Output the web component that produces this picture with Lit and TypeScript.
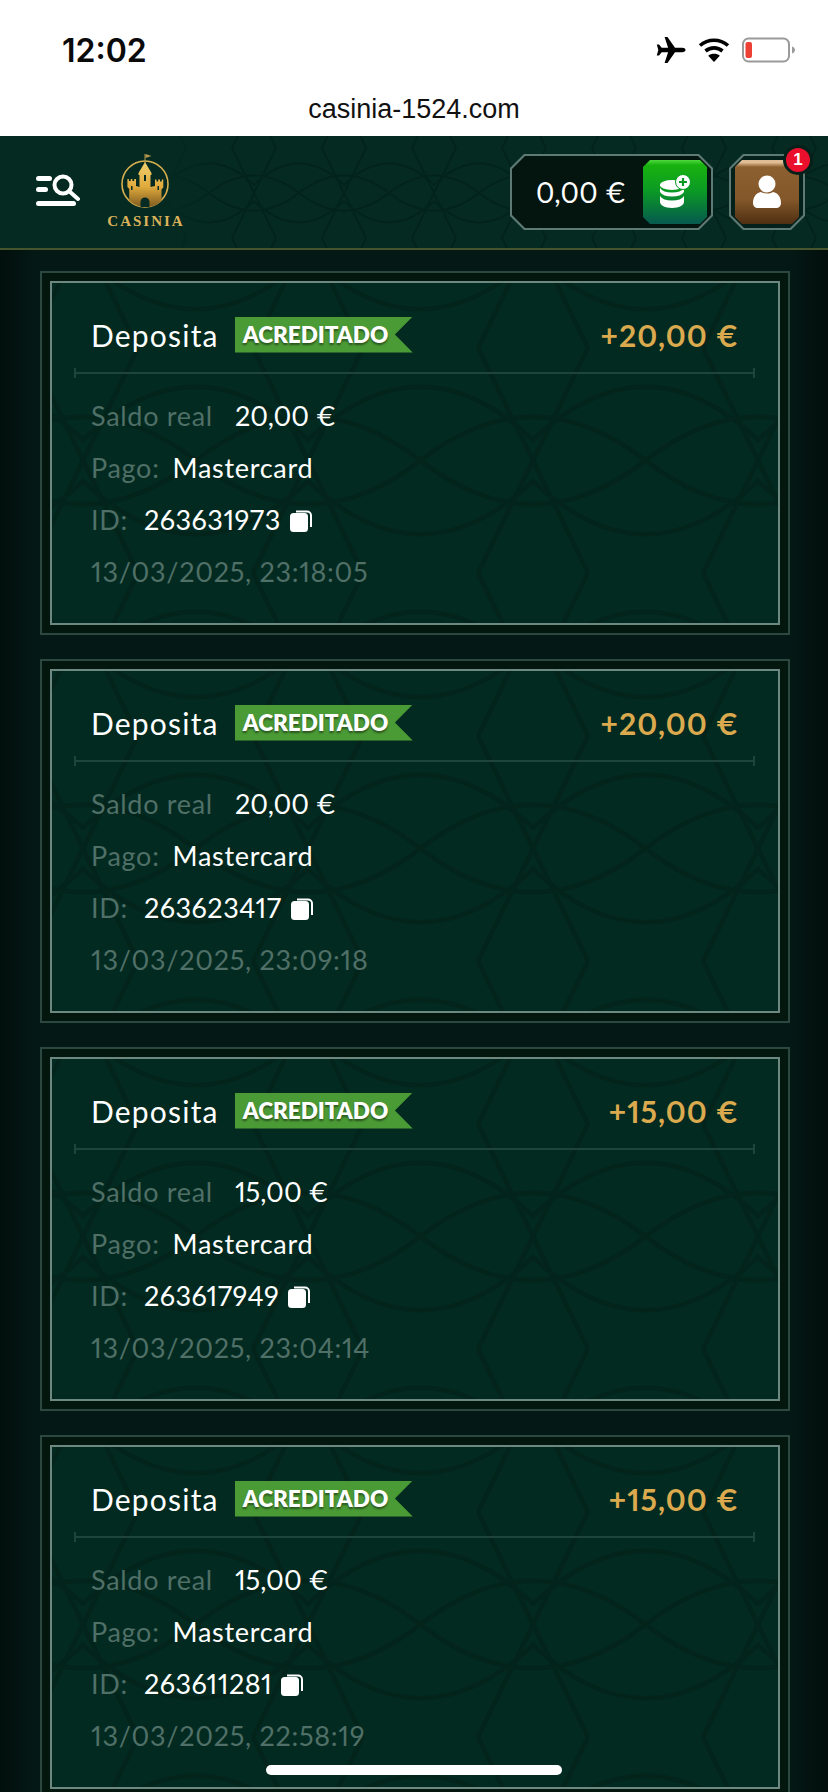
import { LitElement, html, svg, css } from 'lit';
import { customElement } from 'lit/decorators.js';

const deposits = [
  { amount: '20,00 €', id: '263631973', date: '13/03/2025, 23:18:05' },
  { amount: '20,00 €', id: '263623417', date: '13/03/2025, 23:09:18' },
  { amount: '15,00 €', id: '263617949', date: '13/03/2025, 23:04:14' },
  { amount: '15,00 €', id: '263611281', date: '13/03/2025, 22:58:19' },
];

// same interlaced motif for header and cards, only scaled differently
const motif = (stroke: string, width: number) => svg`
  <g fill="none" stroke=${stroke} stroke-width=${width}>
    <path d="M-8 45Q45 -14 98 45Q45 104 -8 45Z" />
    <path d="M-45 45Q0 10 45 45Q90 10 135 45" />
    <path d="M-45 45Q0 80 45 45Q90 80 135 45" />
    <path d="M-22 0L22 90M22 0L-22 90M68 0L112 90M112 0L68 90" />
  </g>
`;

const cardPattern = (pid: string) => html`
  <svg class="pattern" aria-hidden="true">
    <defs>
      <pattern id=${pid} width="90" height="90" patternUnits="userSpaceOnUse" patternTransform="translate(31 65) scale(2.5)">
        ${motif('#02241b', 2)}
      </pattern>
    </defs>
    <rect width="100%" height="100%" fill="url(#${pid})" />
  </svg>
`;

@customElement('app-root')
export class AppRoot extends LitElement {
  static styles = css`
    :host {
      display: block;
      position: relative;
      width: 828px;
      height: 1792px;
      overflow: hidden;
      background: #03150f;
      font-family: Lato, 'Noto Sans', sans-serif;
      font-variant-numeric: proportional-nums;
    }

    .status {
      height: 136px;
      background: #fff;
      display: flex;
      flex-direction: column;
      box-sizing: border-box;
      padding: 29px 32px 0 62px;
    }

    .status-top {
      display: flex;
      justify-content: space-between;
      align-items: center;
      height: 42px;
    }

    .time {
      font: 600 32px Inter, sans-serif;
      color: #0a0a0a;
    }

    .status-icons {
      display: flex;
      align-items: center;
      gap: 12px;
    }

    .domain {
      margin-top: 23px;
      margin-left: -62px;
      margin-right: -32px;
      text-align: center;
      font: 400 27px 'Liberation Sans', sans-serif;
      color: #111;
    }

    .topbar {
      position: relative;
      height: 114px;
      box-sizing: border-box;
      background: #042a22;
      border-bottom: 2px solid #47552f;
      display: flex;
      align-items: center;
      padding: 0 23px 0 36px;
      overflow: hidden;
    }

    .topbar .hdr-pattern {
      position: absolute;
      inset: 0;
      width: 100%;
      height: 100%;
    }

    .topbar > :not(.hdr-pattern) {
      position: relative;
    }

    .menu {
      width: 44px;
      height: 33px;
      margin-top: -4px;
    }

    .logo {
      margin-left: 28px;
      width: 74px;
      display: flex;
      flex-direction: column;
      align-items: center;
      margin-top: -1px;
    }

    .logo-name {
      font: 700 15px 'Liberation Serif', serif;
      letter-spacing: 2px;
      margin-right: -2px;
      color: #dcb35a;
      line-height: 15px;
      margin-top: 6px;
    }

    .spacer {
      flex: 1;
    }

    .balance {
      width: 203px;
      height: 76px;
      background: #5f7a74;
      clip-path: polygon(14px 0, calc(100% - 14px) 0, 100% 14px, 100% calc(100% - 14px), calc(100% - 14px) 100%, 14px 100%, 0 calc(100% - 14px), 0 14px);
      padding: 2px;
      box-sizing: border-box;
    }

    .balance-in {
      height: 100%;
      background: #04140f;
      clip-path: polygon(13px 0, calc(100% - 13px) 0, 100% 13px, 100% calc(100% - 13px), calc(100% - 13px) 100%, 13px 100%, 0 calc(100% - 13px), 0 13px);
      display: flex;
      align-items: center;
      justify-content: space-between;
      padding: 0 4px 0 24px;
    }

    .balance-text {
      font-size: 28px;
      color: #fff;
      letter-spacing: 0.2px;
    }

    .tile {
      width: 64px;
      height: 64px;
      display: flex;
      align-items: center;
      justify-content: center;
      clip-path: polygon(7px 0, calc(100% - 7px) 0, 100% 7px, 100% calc(100% - 7px), calc(100% - 7px) 100%, 7px 100%, 0 calc(100% - 7px), 0 7px);
    }

    .tile.green {
      background: linear-gradient(#4fd83f 0, #18b20f 8%, #0b9a25 48%, #06594f 100%);
    }

    .tile.brown {
      background: linear-gradient(#e0bd94 0, #e0bd94 4%, #8d6030 11%, #83572a 62%, #4f2f12 100%);
    }

    .profile-wrap {
      position: relative;
      margin-left: 16px;
    }

    .profile {
      width: 76px;
      height: 76px;
      background: #5f7a74;
      clip-path: polygon(14px 0, calc(100% - 14px) 0, 100% 14px, 100% calc(100% - 14px), calc(100% - 14px) 100%, 14px 100%, 0 calc(100% - 14px), 0 14px);
      padding: 2px;
      box-sizing: border-box;
    }

    .profile-in {
      height: 100%;
      background: #04201a;
      clip-path: polygon(13px 0, calc(100% - 13px) 0, 100% 13px, 100% calc(100% - 13px), calc(100% - 13px) 100%, 13px 100%, 0 calc(100% - 13px), 0 13px);
      display: flex;
      align-items: center;
      justify-content: center;
    }

    .notif {
      position: absolute;
      top: -9px;
      right: -8px;
      width: 24px;
      height: 24px;
      border-radius: 50%;
      background: #ea0f2c;
      border: 3px solid #04201a;
      color: #fff;
      font: 700 17px 'Liberation Sans', sans-serif;
      display: flex;
      align-items: center;
      justify-content: center;
    }

    .list {
      display: flex;
      flex-direction: column;
      gap: 24px;
      padding: 21px 38px 0 40px;
      background: linear-gradient(90deg, #020f0c 0, #041915 4.5%, #041915 95%, #020f0c 100%);
    }

    .card {
      flex: none;
      height: 364px;
      box-sizing: border-box;
      border: 2px solid #2c4640;
      padding: 8px;
      background: #03170f;
    }

    .card-in {
      position: relative;
      height: 100%;
      box-sizing: border-box;
      border: 2px solid #6d8781;
      background: #022a20;
      padding: 0 40px 0 39px;
      overflow: hidden;
    }

    .pattern {
      position: absolute;
      inset: 0;
      width: 100%;
      height: 100%;
    }

    .card-body {
      position: relative;
    }

    .head {
      display: flex;
      align-items: center;
      height: 89px;
      box-sizing: border-box;
      padding-top: 14px;
      gap: 16px;
    }

    .title {
      font-size: 30px;
      color: #fff;
      letter-spacing: 1.2px;
    }

    .badge {
      height: 36px;
      width: 178px;
      box-sizing: border-box;
      background: #4a9a35;
      clip-path: polygon(0 0, 100% 0, 90% 50%, 100% 100%, 0 100%);
      padding-left: 8px;
      font-size: 22.5px;
      font-weight: 800;
      line-height: 35px;
      color: #fff;
      text-shadow: 0 2px 2px rgba(0, 0, 0, 0.45);
    }

    .amount {
      margin-left: auto;
      font-size: 30px;
      font-weight: 700;
      color: #dba94e;
      letter-spacing: 1px;
      margin-right: -1px;
    }

    .divider {
      position: relative;
      height: 2px;
      background: #1f453b;
      margin: 0 -17px;
    }

    .divider::before,
    .divider::after {
      content: '';
      position: absolute;
      top: -4px;
      width: 2px;
      height: 10px;
      background: #1f453b;
    }

    .divider::before {
      left: 0;
    }

    .divider::after {
      right: 0;
    }

    .rows {
      display: flex;
      flex-direction: column;
      padding-top: 15px;
    }

    .row {
      display: flex;
      align-items: center;
      height: 52px;
      font-size: 27px;
      letter-spacing: 0.7px;
    }

    .label {
      color: #4f6f67;
    }

    .value {
      color: #fff;
    }

    .saldo .label {
      margin-right: 22px;
    }

    .saldo .value {
      letter-spacing: 0;
    }

    .pago .label {
      margin-right: 13px;
    }

    .id .label {
      margin-right: 16px;
    }

    .id .value {
      letter-spacing: 0.5px;
    }

    .copy {
      margin-left: 9px;
      margin-top: 3px;
      width: 22px;
      height: 22px;
    }

    .home {
      position: absolute;
      left: 266px;
      top: 1765px;
      width: 296px;
      height: 10px;
      border-radius: 5px;
      background: #fff;
    }
  `;

  private renderCard(d: { amount: string; id: string; date: string }, i: number) {
    return html`
      <section class="card">
        <div class="card-in">
          ${cardPattern(`card-pat-${i}`)}
          <div class="card-body">
            <div class="head">
              <span class="title">Deposita</span>
              <span class="badge">ACREDITADO</span>
              <span class="amount">+${d.amount}</span>
            </div>
            <div class="divider"></div>
            <div class="rows">
              <div class="row saldo"><span class="label">Saldo real</span><span class="value">${d.amount}</span></div>
              <div class="row pago"><span class="label">Pago:</span><span class="value">Mastercard</span></div>
              <div class="row id">
                <span class="label">ID:</span><span class="value">${d.id}</span>
                <svg class="copy" viewBox="0 0 22 22">
                  <path d="M6 1.500h11a4 4 0 0 1 4 4V17" fill="none" stroke="#fff" stroke-width="2" />
                  <rect x="0" y="3" width="18" height="19" rx="3.500" fill="#fff" />
                </svg>
              </div>
              <div class="row"><span class="label">${d.date}</span></div>
            </div>
          </div>
        </div>
      </section>
    `;
  }

  render() {
    return html`
      <div class="status">
        <div class="status-top">
          <span class="time">12:02</span>
          <div class="status-icons">
            <svg width="30" height="26" viewBox="0 0 30 26">
              <path fill="#000" d="M29.500 13c0-1.300-1.500-2.200-3.200-2.200h-7.300L11.500 0H8.600l3.500 10.800H5.700L3 7.500H.8l1.500 5.500L.8 18.500H3l2.700-3.300h6.400L8.600 26h2.900l7.500-10.800h7.300c1.700 0 3.200-.9 3.200-2.200z" />
            </svg>
            <svg width="32" height="26" viewBox="0 0 32 26">
              <g fill="none" stroke="#000" stroke-width="3.600">
                <path d="M2 8.500C10 1.500 22 1.500 30 8.500" />
                <path d="M7.500 14c5-4.200 12-4.200 17 0" />
              </g>
              <path fill="#000" d="M16 25l-5.800-6.300c3.300-2.600 8.300-2.600 11.600 0z" />
            </svg>
            <svg width="54" height="26" viewBox="0 0 54 26">
              <rect x="1" y="1.500" width="46" height="23" rx="5.500" fill="none" stroke="#9a9a9a" stroke-width="2" />
              <rect x="3.500" y="5" width="6.500" height="16" rx="2" fill="#ee4136" />
              <path d="M50 9.500c2 .6 3 2 3 3.500s-1 2.900-3 3.500z" fill="#9a9a9a" />
            </svg>
          </div>
        </div>
        <div class="domain">casinia-1524.com</div>
      </div>

      <header class="topbar">
        <svg class="hdr-pattern" aria-hidden="true">
          <defs>
            <pattern id="hdr-pat" width="90" height="90" patternUnits="userSpaceOnUse" patternTransform="translate(-16 12)">
              ${motif('#02231b', 2)}
            </pattern>
            <linearGradient id="hdr-fade">
              <stop offset="0" stop-color="#fff" stop-opacity="0" />
              <stop offset="0.2" stop-color="#fff" stop-opacity="0" />
              <stop offset="0.27" stop-color="#fff" />
            </linearGradient>
            <mask id="hdr-mask"><rect width="100%" height="100%" fill="url(#hdr-fade)" /></mask>
          </defs>
          <rect width="100%" height="100%" fill="url(#hdr-pat)" mask="url(#hdr-mask)" />
        </svg>

        <svg class="menu" viewBox="0 0 44 33">
          <g fill="#fff">
            <rect x="0" y="2" width="16" height="5" rx="2.500" />
            <rect x="0" y="13" width="12" height="5" rx="2.500" />
            <rect x="0" y="27" width="40" height="5" rx="2.500" />
          </g>
          <circle cx="27" cy="11" r="8.500" fill="none" stroke="#fff" stroke-width="4" />
          <path d="M33 17l9 8" stroke="#fff" stroke-width="4" stroke-linecap="round" />
        </svg>

        <div class="logo">
          <svg width="52" height="54" viewBox="0 0 52 54">
            <defs>
              <linearGradient id="gold" x1="0" y1="0" x2="0" y2="1">
                <stop offset="0" stop-color="#f2cf6e" />
                <stop offset="0.55" stop-color="#e0aa3c" />
                <stop offset="1" stop-color="#7d5a1f" />
              </linearGradient>
            </defs>
            <circle cx="26" cy="30" r="23" fill="none" stroke="#d9b04f" stroke-width="1.600" />
            <path fill="#b8974a" d="M25.500 0h1v9h-1z" />
            <path fill="#b8974a" d="M26.500 0l6 2-6 2z" />
            <path fill="url(#gold)" d="M19.500 19l6.500-11 6.500 11v2h-1V33l4.500-1v-6.500h1.500v2h1.700v-2h1.800v2h1.800v-2h1.500v8l-1.800 2v11.600A23 23 0 0 1 26 53 23 23 0 0 1 10.200 46.600V35l-1.800-2v-8h1.500v2h1.800v-2h1.700v2h1.800v-2H17V32l3.500 1V21h-1z" />
            <path fill="#062a24" d="M21.500 53v-5a4.500 4.500 0 0 1 9 0v5z" />
            <path fill="#062a24" d="M25 21h2v6h-2zM12 32h1.500v4H12zM38.500 32H40v4h-1.500z" />
          </svg>
          <span class="logo-name">CASINIA</span>
        </div>

        <div class="spacer"></div>

        <div class="balance">
          <div class="balance-in">
            <span class="balance-text">0,00 €</span>
            <div class="tile green">
              <svg width="32" height="34" viewBox="0 0 32 34">
                <g fill="#fff">
                  <ellipse cx="13" cy="10" rx="12" ry="5" />
                  <path d="M1 13c2 3 6 4.500 12 4.500S23 16 25 13v4c-2 3-6 4.500-12 4.500S3 20 1 17z" />
                  <path d="M1 21c2 3 6 4.500 12 4.500S23 24 25 21v6c0 3-5 6-12 6S1 30 1 27z" />
                  <circle cx="24" cy="7" r="7.500" stroke="#0a9a24" stroke-width="1" />
                </g>
                <path d="M24 3v8M20 7h8" stroke="#0a9a24" stroke-width="2.200" />
              </svg>
            </div>
          </div>
        </div>

        <div class="profile-wrap">
          <div class="profile">
            <div class="profile-in">
              <div class="tile brown">
                <svg width="28" height="34" viewBox="0 0 28 34">
                  <g fill="#fff">
                    <circle cx="14" cy="9" r="8.500" />
                    <path d="M0 28c0-6 3-10 8-11 3.500 2 8.500 2 12 0 5 1 8 5 8 11 0 3-2 5-5 5H5c-3 0-5-2-5-5z" />
                  </g>
                </svg>
              </div>
            </div>
          </div>
          <span class="notif">1</span>
        </div>
      </header>

      <main class="list">${deposits.map((d, i) => this.renderCard(d, i))}</main>
      <div class="home"></div>
    `;
  }
}
